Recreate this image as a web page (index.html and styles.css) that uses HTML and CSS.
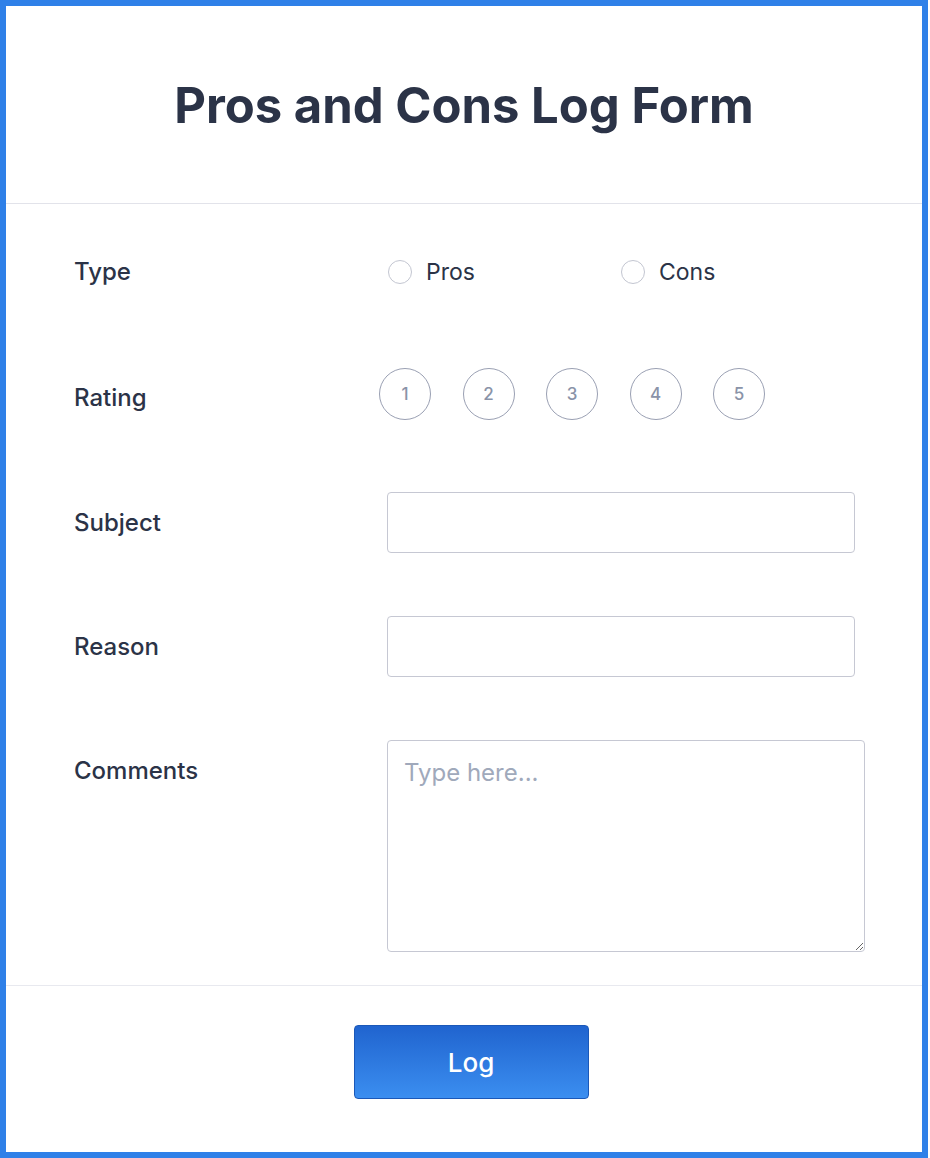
FILE: index.html
```html
<!DOCTYPE html>
<html lang="en">
<head>
  <meta charset="UTF-8">
  <meta name="viewport" content="width=device-width, initial-scale=1.0">
  <title>Pros and Cons Log Form</title>
  <link rel="stylesheet" href="styles.css">
</head>
<body>
  <div class="form-container">
    <div class="form-header">
      <h1>Pros and Cons Log Form</h1>
    </div>
    <form class="form-body" id="log-form">
      <div class="form-row row-type">
        <label class="row-label">Type</label>
        <div class="radio-group">
          <label class="radio-option"><input type="radio" name="type" value="pros"><span>Pros</span></label>
          <label class="radio-option"><input type="radio" name="type" value="cons"><span>Cons</span></label>
        </div>
      </div>
      <div class="form-row row-rating">
        <label class="row-label">Rating</label>
        <div class="rating-group">
          <button type="button" class="rating-btn">1</button>
          <button type="button" class="rating-btn">2</button>
          <button type="button" class="rating-btn">3</button>
          <button type="button" class="rating-btn">4</button>
          <button type="button" class="rating-btn">5</button>
        </div>
      </div>
      <div class="form-row">
        <label class="row-label" for="subject">Subject</label>
        <input type="text" id="subject" class="text-input">
      </div>
      <div class="form-row">
        <label class="row-label" for="reason">Reason</label>
        <input type="text" id="reason" class="text-input">
      </div>
      <div class="form-row row-comments">
        <label class="row-label" for="comments">Comments</label>
        <textarea id="comments" placeholder="Type here..."></textarea>
      </div>
    </form>
    <div class="form-footer">
      <button type="submit" form="log-form" class="log-btn">Log</button>
    </div>
  </div>
</body>
</html>
```

FILE: styles.css
```css
* {
  box-sizing: border-box;
  margin: 0;
  padding: 0;
}
body, html {
  font-family: 'Inter', 'Noto Sans', sans-serif;
  background-color: #ffffff;
  color: #2b3347;
  height: 100%;
}
.form-container {
  width: 928px;
  height: 1158px;
  border: 6px solid #2f80e8;
  display: flex;
  flex-direction: column;
}
.form-header {
  height: 198px;
  display: flex;
  align-items: center;
  justify-content: center;
  border-bottom: 1px solid #e2e3ea;
}
.form-header h1 {
  font-size: 49px;
  font-weight: 700;
  color: #2b3347;
  padding-top: 2px;
}
.form-body {
  display: flex;
  flex-direction: column;
  gap: 63px;
  padding: 36px 0 33px 68px;
  border-bottom: 1px solid #e8e9ef;
}
.form-row {
  display: grid;
  grid-template-columns: 313px 1fr;
  align-items: center;
}
.row-label {
  font-size: 24px;
  font-weight: 500;
  color: #2b3347;
}
.row-type {
  height: 63px;
}
.radio-group {
  display: flex;
}
.radio-option {
  width: 233px;
  display: flex;
  align-items: center;
  font-size: 23px;
  color: #2b3347;
  cursor: pointer;
}
.radio-option input {
  appearance: none;
  width: 24px;
  height: 24px;
  margin-left: 1px;
  margin-right: 14px;
  border: 1px solid #c3c6d1;
  border-radius: 50%;
  background-color: #ffffff;
}
.row-rating {
  height: 63px;
}
.rating-group {
  display: flex;
  gap: 31.5px;
  margin-left: -8px;
  margin-top: -7px;
}
.rating-btn {
  width: 52px;
  height: 52px;
  border: 1px solid #9aa0b3;
  border-radius: 50%;
  background-color: #ffffff;
  color: #8a93a8;
  font-family: 'Inter', sans-serif;
  font-size: 17px;
  font-weight: 500;
  cursor: pointer;
}
.text-input {
  width: 468px;
  height: 61px;
  border: 1px solid #c6c8d3;
  border-radius: 4px;
  padding: 0 16px;
  font-family: 'Inter', sans-serif;
  font-size: 23px;
  color: #2b3347;
}
.row-comments {
  align-items: start;
}
.row-comments .row-label {
  padding-top: 16px;
}
#comments {
  width: 478px;
  height: 212px;
  border: 1px solid #c6c8d3;
  border-radius: 4px;
  padding: 17px 16px;
  font-family: 'Inter', sans-serif;
  font-size: 24px;
  color: #2b3347;
  resize: both;
}
#comments::placeholder {
  color: #a0a9bb;
}
.form-footer {
  flex-grow: 1;
  display: flex;
  justify-content: center;
  align-items: flex-start;
  padding-top: 39px;
  padding-left: 14px;
}
.log-btn {
  width: 235px;
  height: 74px;
  border: 1px solid #1b58b8;
  border-radius: 4px;
  background: linear-gradient(to bottom, #2064cf, #3b8ef0);
  color: #ffffff;
  font-family: 'Inter', sans-serif;
  font-size: 26px;
  font-weight: 500;
  cursor: pointer;
}
```
